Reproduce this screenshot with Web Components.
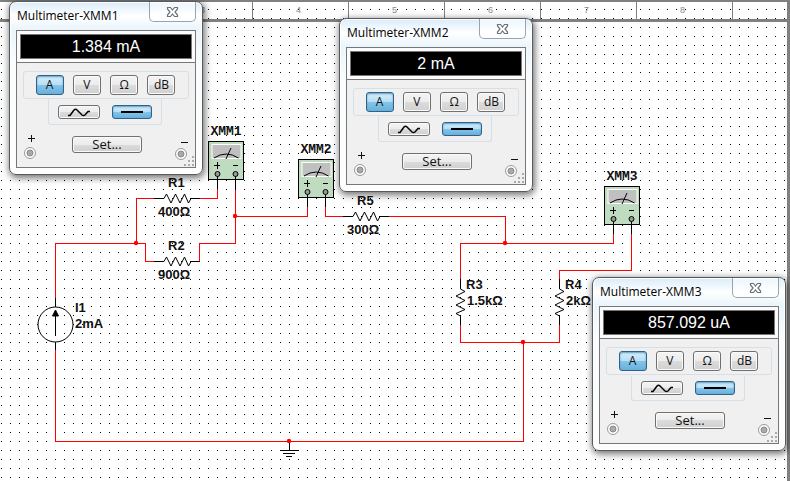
<!DOCTYPE html>
<html lang="en">
<head>
<meta charset="utf-8">
<title>Circuit sheet</title>
<style>
html, body { margin: 0; height: 100%; }
body { background: #fff; font-family: "Liberation Sans", Arial, sans-serif; overflow: hidden; }
</style>
</head>
<body>
<circuit-sheet>
  <sheet-ruler slot="ruler"></sheet-ruler>
  <circuit-wiring slot="wiring"></circuit-wiring>
  <meter-symbol name="XMM1" style="left:208px;top:123px"></meter-symbol>
  <meter-symbol name="XMM2" style="left:298px;top:141px"></meter-symbol>
  <meter-symbol name="XMM3" style="left:604px;top:168px"></meter-symbol>
  <meter-window name="Multimeter-XMM1" style="left:9px;top:1px">1.384 mA</meter-window>
  <meter-window name="Multimeter-XMM2" style="left:339px;top:18px">2 mA</meter-window>
  <meter-window name="Multimeter-XMM3" style="left:592px;top:277px">857.092 uA</meter-window>
</circuit-sheet>

<template id="sheet">
  <style>
    :host { display: block; position: relative; box-sizing: border-box; min-height: 100vh; border-right: 3px solid #808080; }
    ::slotted(meter-symbol), ::slotted(meter-window) { position: absolute; }
    .wiring { position: absolute; inset: 0; }
    .ruler { position: relative; }
  </style>
  <div class="wiring"><slot name="wiring"></slot></div>
  <div class="ruler"><slot name="ruler"></slot></div>
  <slot></slot>
</template>

<template id="ruler">
  <style>
    :host { display: flex; box-sizing: border-box; height: 22px; border-top: 2px solid #808080; border-bottom: 3px solid #808080; overflow: hidden; }
    span { flex: 0 0 96px; box-sizing: border-box; border-right: 1px solid #808080; padding-right: 4px; text-align: center; font-size: 9px; line-height: 17px; color: #888; }
    .first { flex-basis: 61px; }
    .last { flex: 1 1 0; border: 0; }
  </style>
  <span class="first"></span><span></span><span>3</span><span>4</span><span>5</span><span>6</span><span>7</span><span>8</span><span class="last"></span>
</template>

<template id="wiring">
  <style>
    :host { display: block; height: 100%; }
    svg { display: block; width: 100%; height: 100%; }
    .w { fill: none; stroke: #f00; }
    .b { fill: none; stroke: #000; }
    .n { fill: #f00; }
    text { font: bold 13px "Liberation Sans", Arial, sans-serif; fill: #111; }
  </style>
  <svg role="img" aria-label="Circuit diagram">
    <defs>
      <pattern id="dots" width="9" height="9" patternUnits="userSpaceOnUse"><rect x="1" y="0" width="1" height="1"/></pattern>
      <path id="res" d="M-10 .5H0L2.5 -4L7 5L11.500 -4L16 5L20.500 -4L24.500 5L27 .5H36"/>
    </defs>
    <rect width="100%" height="100%" fill="url(#dots)"/>
    <g class="w" shape-rendering="crispEdges">
      <path d="M154 198.500H136.500V243.500M200 198.500H217.500V189"/>
      <path d="M55.500 298V243.500H145.500V261.500H154M199.500 261.500V243.500H235.500V190"/>
      <path d="M235 216.500H307.500V207M325.500 207V216.500H343M389 216.500H505.500V243"/>
      <path d="M460.500 280V243.500H613.500V234M631.500 234V270.500H559.500V280"/>
      <path d="M460.500 324V342.500H559.500V324M523.500 342V441.500H55.500V350"/>
    </g>
    <g class="b" shape-rendering="crispEdges">
      <path d="M217.500 175V189M235.500 175V190M307.500 193V207M325.500 193V207M613.500 220V234M631.500 220V234M55.500 298V307M55.500 342V350"/>
      <path d="M289.500 442V450.500M280 450.500H299M283 453.500H295M286 456.500H292"/>
    </g>
    <g class="b">
      <use href="#res" x="164" y="198"/>
      <use href="#res" x="164" y="261"/>
      <use href="#res" x="353" y="216"/>
      <use href="#res" transform="translate(461 289) rotate(90)"/>
      <use href="#res" transform="translate(560 289) rotate(90)"/>
      <circle cx="55.500" cy="324.500" r="17.500"/>
      <path d="M55.500 314V336"/>
      <path d="M55.500 310L58.500 316H52.500Z" fill="#000"/>
    </g>
    <g class="n">
      <circle cx="136" cy="243" r="2.200"/><circle cx="235" cy="216" r="2.200"/>
      <circle cx="505" cy="243" r="2.200"/><circle cx="523" cy="342" r="2.200"/>
      <circle cx="289" cy="441" r="2.200"/>
    </g>
    <text x="168" y="187">R1</text><text x="158" y="216">400Ω</text>
    <text x="168" y="250">R2</text><text x="158" y="279">900Ω</text>
    <text x="75" y="312">I1</text><text x="75" y="328">2mA</text>
    <text x="357" y="205">R5</text><text x="347" y="234">300Ω</text>
    <text x="466" y="289">R3</text><text x="467" y="305">1.5kΩ</text>
    <text x="565" y="289">R4</text><text x="566" y="305">2kΩ</text>
  </svg>
</template>

<template id="symbol">
  <style>
    :host { display: flex; flex-direction: column; align-items: center; width: 36px; }
    .name { font: bold 13px/17px "Liberation Mono", "Courier New", monospace; color: #111; height: 18px; }
    svg { display: block; }
  </style>
  <div class="name"></div>
  <svg width="36" height="39" fill="none" stroke="#000" aria-hidden="true">
    <rect x=".5" y=".5" width="35" height="38" fill="#c0dcc0"/>
    <rect x="4" y="3.500" width="29" height="14" fill="#c0c0c0" stroke="#fff"/>
    <path d="M6 17Q18 9 30.500 17M23 7L18 18"/>
    <path d="M6 24.500H12M9.500 21V28M25 24.500H30"/>
    <path d="M9.500 35V39M27.500 35V39"/>
    <circle cx="9.500" cy="33" r="2.500" fill="#999"/><circle cx="27.500" cy="33" r="2.500" fill="#999"/>
  </svg>
</template>

<template id="window">
  <style>
    :host { display: block; box-sizing: border-box; width: 194px; border: 1px solid #555a5e; border-radius: 7px; padding: 0 6px 6px;
      background: linear-gradient(#d9ecfa, #fff 14px, #eaf5fc 27px, #fafcfd 60px, #fdfdfd);
      box-shadow: inset 0 0 0 1px #fff, 1px 2px 7px 1px rgba(0,0,0,.55); color: #111; }
    header { display: flex; justify-content: space-between; align-items: flex-start; height: 28px; }
    h2 { margin: 0; padding: 4px 0 0 1px; font: 12px/20px "Open Sans", "Noto Sans", sans-serif; color: #000; white-space: nowrap; }
    .close { width: 47px; height: 20px; padding: 0; border: 1px solid #9aa3aa; border-top: 0; border-radius: 0 0 5px 5px; background: rgba(255,255,255,.5); display: grid; place-items: center; }
    .client { border: 1px solid #777; background: #f0f0f0; display: flex; flex-direction: column; align-items: center; height: 136px; }
    output { display: block; box-sizing: border-box; align-self: stretch; border: 3px solid #fbfbfb; outline: 1px solid #777; height: 31px; box-shadow: inset 0 0 0 1px #777; background: #000; color: #fff; font: 16px/25px "Liberation Sans", Arial, sans-serif; text-align: center; }
    .modes, .kinds { box-sizing: border-box; display: flex; justify-content: space-between; border: 1px solid #d5dfe8; border-radius: 3px; }
    .modes { width: 166px; height: 28px; margin-top: 9px; margin-right: 1px; padding: 3px 12px; }
    .kinds { width: 114px; height: 27px; margin-top: -1px; margin-right: 3px; border-top: 0; padding: 7px 9px 5px; }
    .b { box-sizing: border-box; border: 1px solid #707070; border-radius: 3px; padding: 0; font: 12px/16px "Open Sans", "Noto Sans", sans-serif; color: #111;
      background: linear-gradient(#f4f4f4, #ececec 50%, #dcdcdc 50%, #d0d0d0); box-shadow: inset 0 0 0 1px #fafafa; }
    .modes .b { width: 28px; height: 20px; }
    .kinds .b { width: 42px; height: 14px; display: grid; place-items: center; }
    .kinds .b.on { width: 40px; }
    .on { border-color: #2c628b; background: linear-gradient(#d8effb, #b4def5 50%, #86c5e9 50%, #68b0db); box-shadow: inset 0 1px 2px #5f9bbd; }
    footer { flex: 1; align-self: stretch; display: flex; justify-content: space-between; align-items: flex-start; padding: 7px 0 0 6px; }
    .set { width: 70px; height: 17px; margin: 4px 0 0 3px; }
    .set.b { font-size: 13px; line-height: 15px; }
    svg { display: block; }
  </style>
  <header>
    <h2></h2>
    <button class="close" aria-label="Close"><svg width="13" height="12" viewBox="0 0 13 12"><path d="M1.500 1.500H4.500L6.500 4L8.500 1.500H11.500V3L9 6L11.500 9V10.500H8.500L6.500 8L4.500 10.500H1.500V9L4 6L1.500 3Z" fill="#fff" stroke="#6b7178" stroke-width="1.200"/></svg></button>
  </header>
  <div class="client">
    <output><slot></slot></output>
    <div class="modes"><button class="b on">A</button><button class="b">V</button><button class="b">Ω</button><button class="b">dB</button></div>
    <div class="kinds">
      <button class="b" aria-label="AC"><svg width="24" height="9" fill="none" stroke="#000" stroke-width="1.500"><path d="M1 7.500H3L7 2Q8.500 .5 10 2L15 7Q16.500 8 18 7L21 3.500H23"/></svg></button>
      <button class="b on" aria-label="DC"><svg width="22" height="4"><rect y="1" width="22" height="2"/></svg></button>
    </div>
    <footer>
      <svg width="14" height="28" fill="none" aria-hidden="true"><path d="M5 6.500H12M8.500 3V10" stroke="#111"/><circle cx="7" cy="21" r="5.500" stroke="#999" fill="#fff"/><circle cx="7" cy="21" r="3" stroke="#888" fill="#aaa"/></svg>
      <button class="b set">Set...</button>
      <svg width="21" height="34" fill="none" aria-hidden="true"><path d="M7 10.500H14" stroke="#111"/><circle cx="7" cy="22" r="5.500" stroke="#999" fill="#fff"/><circle cx="7" cy="22" r="3" stroke="#888" fill="#aaa"/><path d="M18 24h2v2h-2zM14 28h2v2h-2zM18 28h2v2h-2zM10 32h2v2h-2zM14 32h2v2h-2zM18 32h2v2h-2z" fill="#aaa"/></svg>
    </footer>
  </div>
</template>

<script>
class TemplateElement extends HTMLElement {
  constructor() {
    super();
    const root = this.attachShadow({ mode: "open" });
    root.append(document.getElementById(this.constructor.template).content.cloneNode(true));
  }
}
class CircuitSheet extends TemplateElement { static template = "sheet"; }
class SheetRuler extends TemplateElement { static template = "ruler"; }
class CircuitWiring extends TemplateElement { static template = "wiring"; }
class MeterSymbol extends TemplateElement {
  static template = "symbol";
  connectedCallback() { this.shadowRoot.querySelector(".name").textContent = this.getAttribute("name"); }
}
class MeterWindow extends TemplateElement {
  static template = "window";
  connectedCallback() { this.shadowRoot.querySelector("h2").textContent = this.getAttribute("name"); }
}
customElements.define("circuit-sheet", CircuitSheet);
customElements.define("sheet-ruler", SheetRuler);
customElements.define("circuit-wiring", CircuitWiring);
customElements.define("meter-symbol", MeterSymbol);
customElements.define("meter-window", MeterWindow);
</script>
</body>
</html>
